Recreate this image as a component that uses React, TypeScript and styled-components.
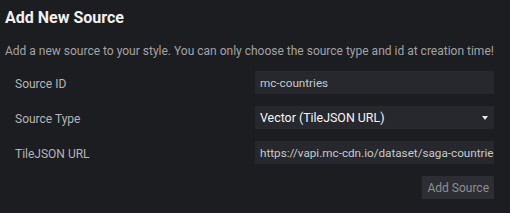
import { FC } from 'react'
import styled, { createGlobalStyle } from 'styled-components'

const GlobalStyle = createGlobalStyle`
  html, body {
    margin: 0;
    padding: 0;
    background: #1c1d21;
  }
  body {
    font-family: Roboto, "Liberation Sans", sans-serif;
  }
`

const Modal = styled.div`
  width: 510px;
  height: 213px;
  box-sizing: border-box;
  background: #1c1d21;
  color: #f0f0f0;
  padding: 8px 0 0 5px;
`

const Title = styled.h1`
  margin: 0;
  font-size: 16px;
  font-weight: 700;
  line-height: 20px;
  color: #f0f0f0;
`

const Description = styled.p`
  margin: 16px 0 0;
  font-size: 12px;
  line-height: 14px;
  color: #a3a3a6;
`

const Form = styled.div`
  display: flex;
  flex-direction: column;
  gap: 12px;
  padding: 0 16px 0 10px;
  margin-top: 13px;
`

const Row = styled.div`
  display: grid;
  grid-template-columns: 240px 1fr;
  align-items: center;
`

const Label = styled.label`
  font-size: 12px;
  color: #b4b4b7;
  padding-top: 3px;
`

const Field = styled.div<{ $select?: boolean }>`
  position: relative;
  height: 23px;
  box-sizing: border-box;
  background: #26282e;
  padding: 0 5px;
  display: flex;
  align-items: center;
  font-size: ${(p) => (p.$select ? '12.4px' : '11.7px')};
  white-space: nowrap;
  overflow: hidden;
  color: ${(p) => (p.$select ? '#f6f6f6' : '#c8c8ca')};
`

const Caret = styled.span`
  position: absolute;
  right: 6px;
  top: 10px;
  width: 0;
  height: 0;
  border-left: 3.5px solid transparent;
  border-right: 3.5px solid transparent;
  border-top: 4px solid #e8e8e8;
`

const Actions = styled.div`
  display: flex;
  justify-content: flex-end;
`

const Button = styled.button`
  height: 23px;
  padding: 0 5px;
  border: none;
  background: #2c2e33;
  color: #8e8e90;
  font-family: Roboto, "Liberation Sans", sans-serif;
  font-size: 12px;
`

interface IRow {
  label: string
  value: string
  select?: boolean
}

const FormRow: FC<IRow> = ({ label, value, select }) => (
  <Row>
    <Label>{label}</Label>
    <Field $select={select}>
      {value}
      {select && <Caret />}
    </Field>
  </Row>
)

const App: FC = () => {
  return (
    <>
      <GlobalStyle />
      <Modal>
        <Title>Add New Source</Title>
        <Description>
          Add a new source to your style. You can only choose the source type and id at creation time!
        </Description>
        <Form>
          <FormRow label="Source ID" value="mc-countries" />
          <FormRow label="Source Type" value="Vector (TileJSON URL)" select />
          <FormRow label="TileJSON URL" value="https://vapi.mc-cdn.io/dataset/saga-countries" />
          <Actions>
            <Button>Add Source</Button>
          </Actions>
        </Form>
      </Modal>
    </>
  )
}

export default App
